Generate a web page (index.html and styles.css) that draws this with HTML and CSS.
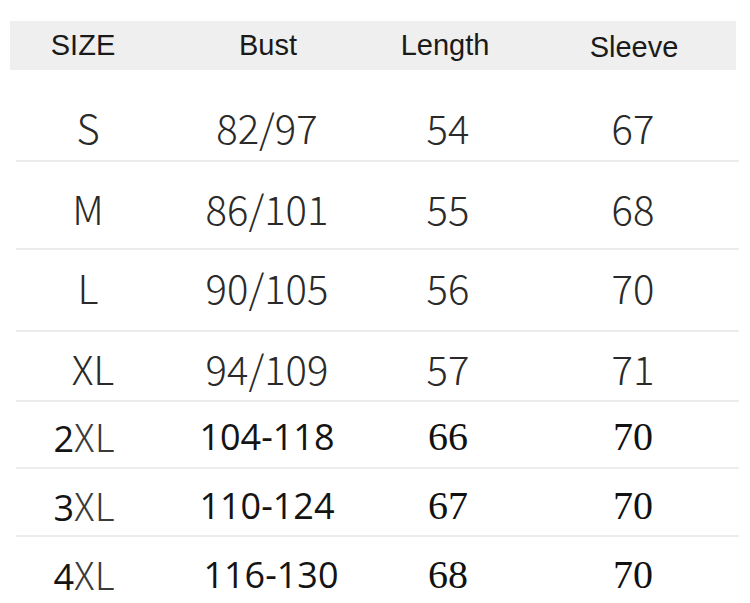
FILE: index.html
```html
<!DOCTYPE html>
<html lang="en">
<head>
<meta charset="utf-8">
<link rel="stylesheet" href="styles.css">
</head>
<body>
<div class="chart">
  <div class="head">
    <div class="hc">SIZE</div>
    <div class="hc">Bust</div>
    <div class="hc">Length</div>
    <div class="hc hc-last">Sleeve</div>
  </div>
  <div class="row r1 light">
    <div class="c">S</div><div class="c">82/97</div><div class="c">54</div><div class="c c4">67</div>
  </div>
  <div class="row r2 light">
    <div class="c">M</div><div class="c">86/101</div><div class="c">55</div><div class="c c4">68</div>
  </div>
  <div class="row r3 light">
    <div class="c">L</div><div class="c">90/105</div><div class="c">56</div><div class="c c4">70</div>
  </div>
  <div class="row r4 light">
    <div class="c nudge-r">XL</div><div class="c">94/109</div><div class="c">57</div><div class="c c4">71</div>
  </div>
  <div class="row r5">
    <div class="c nudge-l"><span class="os">2</span><span class="lt">XL</span></div><div class="c os">104-118</div><div class="c tr" lang="en">66</div><div class="c c4 tr" lang="en">70</div>
  </div>
  <div class="row r6">
    <div class="c nudge-l"><span class="os">3</span><span class="lt">XL</span></div><div class="c os">110-124</div><div class="c tr" lang="en">67</div><div class="c c4 tr" lang="en">70</div>
  </div>
  <div class="row r7 last">
    <div class="c nudge-l"><span class="os">4</span><span class="lt">XL</span></div><div class="c os nudge-b">116-130</div><div class="c tr" lang="en">68</div><div class="c c4 tr" lang="en">70</div>
  </div>
</div>
</body>
</html>
```
FILE: styles.css
```css
html, body {
  margin: 0;
  padding: 0;
  background: #ffffff;
}
body {
  width: 750px;
  height: 603px;
  overflow: hidden;
}
.chart {
  padding-top: 21px;
}
.head {
  margin-left: 10px;
  width: 726px;
  height: 49px;
  background: #efefef;
  display: grid;
  grid-template-columns: 146px 224px 130px 1fr;
  align-items: center;
  font-family: "Liberation Sans", Arial, sans-serif;
  font-size: 29px;
  color: #1a1a1a;
}
.hc {
  text-align: center;
  line-height: 1;
}
.hc-last {
  padding-left: 22px;
  padding-top: 4px;
}
.row {
  margin-left: 16px;
  width: 723px;
  display: grid;
  grid-template-columns: 144px 214px 148px 1fr;
  align-items: center;
  border-bottom: 2px solid #ececec;
  box-sizing: border-box;
}
.row.last {
  border-bottom: none;
}
.c {
  text-align: center;
  line-height: 1;
  white-space: nowrap;
}
.c4 {
  padding-left: 5px;
}
.light .c, .lt {
  font-family: "Noto Sans CJK SC", "Noto Sans", sans-serif;
  font-weight: 300;
  font-size: 40px;
  color: #2a2a2a;
}
.lt {
  font-size: 38px;
  color: #3a3a3a;
}
.os {
  font-family: "Open Sans", "Noto Sans", sans-serif;
  font-size: 36px;
  color: #141414;
}
.tr {
  font-family: "Liberation Serif", "Times New Roman", serif;
  font-size: 40px;
  color: #111111;
}
.nudge-r { padding-left: 10px; }
.nudge-l { padding-right: 8px; }
.nudge-b { padding-left: 8px; }

.r1 { height: 92px; padding-top: 24px; }
.r2 { height: 88px; padding-top: 6px; }
.r3 { height: 82px; padding-bottom: 6px; }
.r4 { height: 70px; padding-top: 4px; }
.r5 { height: 67px; padding-top: 5px; }
.r6 { height: 68px; padding-top: 8px; }
.r7 { height: 76px; }
```
